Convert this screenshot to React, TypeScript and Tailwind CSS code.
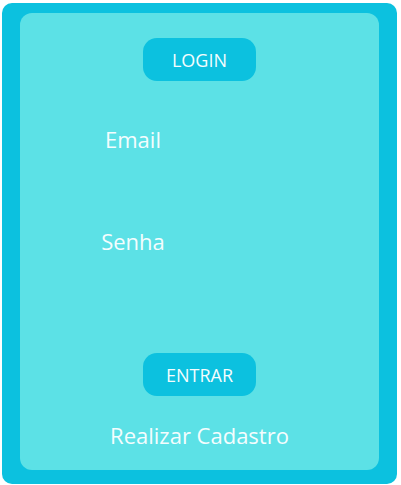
import React from 'react'

const App: React.FC = () => {
  return (
    <div className="w-[401px] h-[485px] bg-white pl-[2px] pt-[3px]" style={{ fontFamily: '"Open Sans", "Liberation Sans", sans-serif' }}>
      <div className="w-[395px] h-[481px] rounded-[10px] bg-[#0cc1df] pt-[10px] pl-[18px]">
        <div className="w-[359px] h-[457px] rounded-[12px] bg-[#5ce1e6] flex flex-col items-center text-[#f4fdfe]">
          <button className="mt-[25px] w-[113px] h-[43px] rounded-[14px] bg-[#0cc1df] text-[18px] leading-[24px]">
            LOGIN
          </button>
          <div className="self-start w-[226px] text-center mt-[43px] text-[22px] leading-[30px]">Email</div>
          <div className="self-start w-[226px] text-center mt-[72px] text-[22px] leading-[30px]">Senha</div>
          <button className="mt-[97px] w-[113px] h-[43px] rounded-[14px] bg-[#0cc1df] text-[18px] leading-[24px]">
            ENTRAR
          </button>
          <div className="mt-[24px] text-[22px] leading-[30px]">Realizar Cadastro</div>
        </div>
      </div>
    </div>
  )
}

export default App
